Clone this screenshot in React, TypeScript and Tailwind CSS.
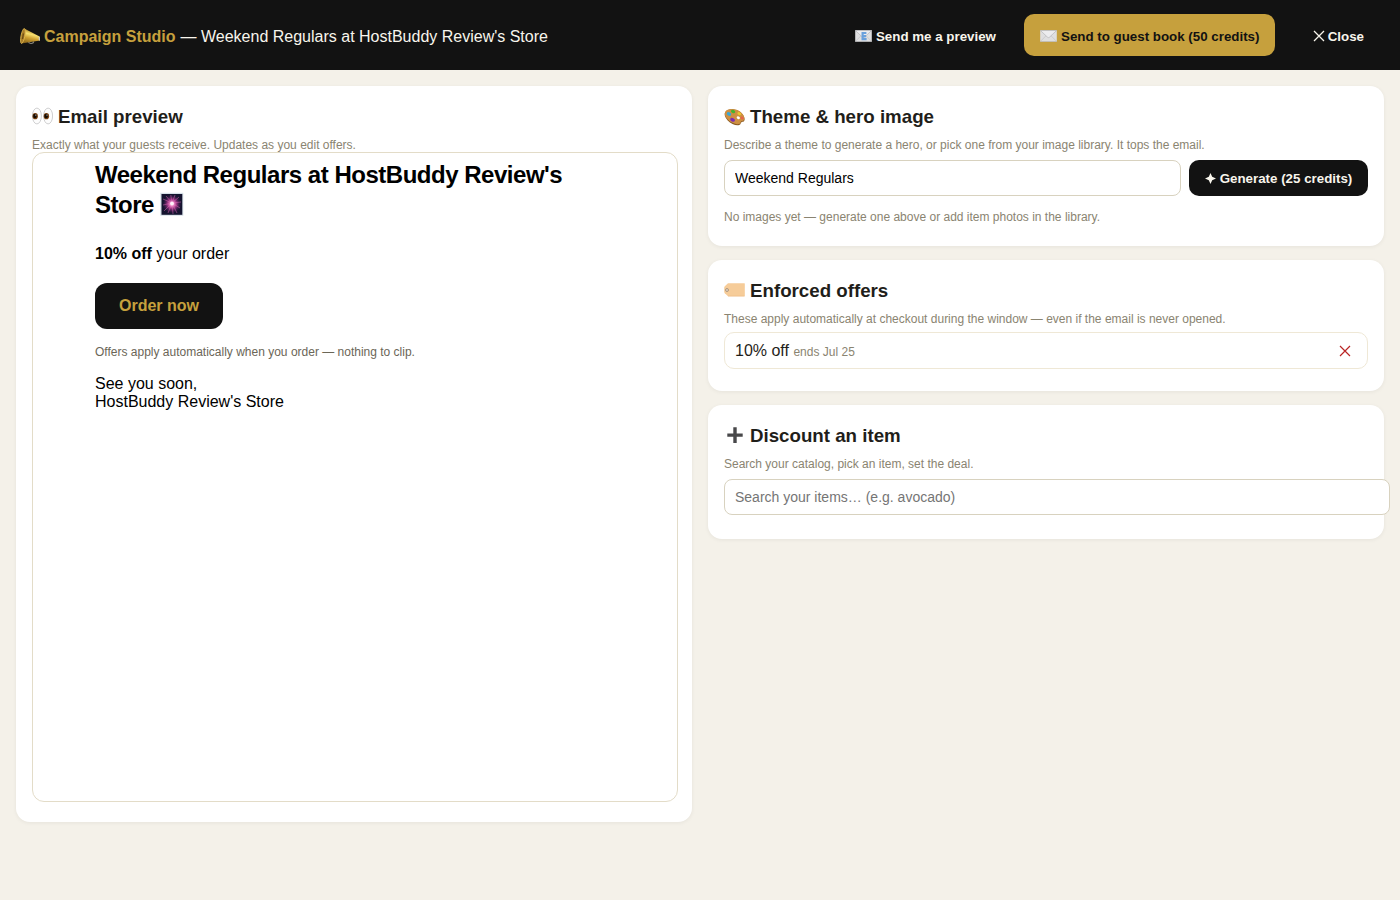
import React from 'react';

function Megaphone() {
  return (
    <svg className="block h-[20px] w-[21px] shrink-0" viewBox="0 0 21 20">
      <defs>
        <linearGradient id="horn" x1="0.3" y1="0" x2="0" y2="1">
          <stop offset="0" stopColor="#a67c1c" />
          <stop offset="0.3" stopColor="#f7e070" />
          <stop offset="0.55" stopColor="#d0a232" />
          <stop offset="1" stopColor="#7c5814" />
        </linearGradient>
      </defs>
      <path d="M8.3 14.4c.4 2.6 4.8 2.8 5.600.1" fill="none" stroke="#8d8a80" strokeWidth="1.1" />
      <path d="M4.200 1.400 19.600 9.600 20 13.600 1.300 16.400Z" fill="url(#horn)" />
      <ellipse cx="2.900" cy="9" rx="1.900" ry="7.600" transform="rotate(11 2.900 9)" fill="#a97c26" stroke="#dcb752" strokeWidth=".8" />
      <path d="M3.400 6.500 2.500 12" stroke="#6b4c15" strokeWidth="1.300" />
      <path d="m18.800 9.500 1.200.5v3.600l-1.200.2Z" fill="#c7c7bd" />
    </svg>
  );
}

function Envelope({ letter = false }: { letter?: boolean }) {
  return (
    <svg className="block h-[12px] w-[17px] shrink-0" viewBox="0 0 17 12">
      <rect x=".2" y=".3" width="16.6" height="11.4" rx=".5" fill="#dfdfe0" />
      <path d="M.5 11.3 6.500 5.300M16.500 11.300l-6-6" stroke="#c3c3c5" strokeWidth=".7" />
      <path d="M.4.5 7.400 7.100q1.100 1 2.200 0L16.600.5Z" fill="#ececee" stroke="#b5b5b8" strokeWidth=".7" />
      <path d="M.2 11.600h16.600" stroke="#b0b0b2" strokeWidth=".6" />
      {letter && (
        <path d="M11.400 3H7.600v6.200h4M7.600 6.100h3.500" fill="none" stroke="#6ba1dc" strokeWidth="2.200" />
      )}
    </svg>
  );
}

function Eyes() {
  return (
    <svg className="mb-[2px] block h-[18px] w-[21px] shrink-0" viewBox="0 0 21 18">
      <g fill="#fdfdfd" stroke="#c9c9cb" strokeWidth=".9">
        <ellipse cx="4.9" cy="9" rx="4.5" ry="7.900" />
        <ellipse cx="16.1" cy="9" rx="4.5" ry="7.900" />
      </g>
      <ellipse cx="3.2" cy="9.2" rx="2.7" ry="3.1" fill="#7a4210" />
      <ellipse cx="14.4" cy="9.2" rx="2.7" ry="3.1" fill="#7a4210" />
      <ellipse cx="3" cy="9" rx="1.8" ry="2.3" fill="#140b05" />
      <ellipse cx="14.2" cy="9" rx="1.8" ry="2.3" fill="#140b05" />
      <circle cx="3.8" cy="8" r=".6" fill="#fff" />
      <circle cx="15" cy="8" r=".6" fill="#fff" />
    </svg>
  );
}

function Palette() {
  return (
    <svg className="block h-[18px] w-[21px] shrink-0" viewBox="0 0 21 18">
      <path d="M1.200 4.200C3 .8 9.500.4 14.200 2.800c4.200 2.100 6.800 6 6.300 9.300-.4 2.200-2 1.600-3 2.100-1.300.6-.4 2.300-2.300 2.800-3.200.8-8.300-1-11.500-4.600C1 9.500-.1 6.500 1.200 4.200Z" fill="#8a5a22" />
      <path d="M1.300 3.700C3.100.5 9.500.2 14.200 2.500c4.100 2.100 6.600 5.800 6.200 8.800-.4 1.900-2 1.400-3 1.900-1.300.6-.4 2.400-2.300 2.800-3.200.7-8.200-1-11.300-4.400C1.200 8.900.1 5.900 1.300 3.700Z" fill="#cd8f42" />
      <ellipse cx="14.300" cy="9.800" rx="1.700" ry="1.300" transform="rotate(25 14.300 9.800)" fill="#fff" />
      <ellipse cx="9.100" cy="3.500" rx="2.200" ry="1.500" transform="rotate(20 9.100 3.500)" fill="#45b52d" />
      <ellipse cx="5" cy="6" rx="2.300" ry="1.700" transform="rotate(25 5 6)" fill="#35a7d8" />
      <ellipse cx="8.600" cy="11.800" rx="2.500" ry="1.800" transform="rotate(25 8.600 11.800)" fill="#7a2db4" />
      <ellipse cx="15.300" cy="5.700" rx="2" ry="1.400" transform="rotate(25 15.300 5.700)" fill="#e9c82d" />
      <ellipse cx="18.100" cy="10" rx="1.700" ry="1.300" transform="rotate(35 18.100 10)" fill="#ea6149" />
    </svg>
  );
}

function Tag() {
  return (
    <svg className="mb-[2px] block h-[18px] w-[21px] shrink-0" viewBox="0 0 21 18">
      <path d="M4 2.300h16.300q.5 0 .5.500v12q0 .5-.5.500H4L.8 12.300Q.2 11.700.2 10.800v-4q0-.9.600-1.500Z" fill="#f6cc99" />
      <path d="M4 15.100h16.500" stroke="#e9b980" strokeWidth=".6" />
      <circle cx="3" cy="9" r="1.500" fill="#e5d4c0" stroke="#9e8a76" strokeWidth=".8" />
    </svg>
  );
}

function Plus() {
  return (
    <svg className="mb-[2px] block h-[18px] w-[21px] shrink-0" viewBox="0 0 21 18">
      <path d="M9.300 1.300h3.400v6.100h6v3.400h-6V17H9.300v-6.200h-6V7.400h6Z" fill="#48484a" />
    </svg>
  );
}

function Sparkler() {
  return (
    <svg className="mb-[2px] block h-[24px] w-[24px] shrink-0" viewBox="0 0 24 24">
      <defs>
        <radialGradient id="glow">
          <stop offset="0" stopColor="#fff" />
          <stop offset=".2" stopColor="#ff9ad0" />
          <stop offset=".5" stopColor="#b53a92" stopOpacity=".8" />
          <stop offset="1" stopColor="#451c55" stopOpacity="0" />
        </radialGradient>
      </defs>
      <rect x=".3" y=".8" width="23" height="23" fill="#d7e1e8" />
      <rect x="1.500" y="2" width="20.800" height="20.800" fill="#15142f" />
      <circle cx="12" cy="12" r="9.500" fill="url(#glow)" />
      <path d="m12 11-1.200-8M12 11l3-8M12 11l7-6M12 11l9-1M12 11l8 5M12 11l5 10M12 11l1 11M12 11 8 21M12 11l-8 8M12 11l-9 2M12 11 3 7M12 11 6 4" stroke="#d866b5" strokeWidth=".5" />
      <circle cx="12" cy="11.500" r="1.900" fill="#fff2fa" />
    </svg>
  );
}

function Cross({ className }: { className: string }) {
  return (
    <svg className={className} viewBox="0 0 12 12" fill="none" stroke="currentColor">
      <path d="m1 1 10 10M11 1 1 11" />
    </svg>
  );
}

function Card({ icon, title, hint, className, children }: {
  icon: React.ReactNode; title: string; hint: string; className: string; children: React.ReactNode;
}) {
  return (
    <section className={`rounded-[14px] bg-white px-4 pt-5 shadow-[0_1px_4px_rgba(0,0,0,0.06)] ${className}`}>
      <h3 className="flex h-[22px] items-center gap-[5px] text-[18.72px] leading-[22px] font-bold whitespace-nowrap text-[#1f1e1a]">
        {icon}
        <span>{title}</span>
      </h3>
      <p className="mt-[10px] h-[14px] text-[12px] leading-[14px] whitespace-nowrap text-[#8a8471]">{hint}</p>
      {children}
    </section>
  );
}

export default function App() {
  return (
    <div className="h-[900px] w-[1400px] overflow-hidden bg-[#f4f1e9] font-['Liberation_Sans',Arial,sans-serif] text-[16px] text-[#1f1e1a]">
      <header className="flex h-[70px] items-center bg-[#121212] px-5 text-[#f8f5ec]">
        <div className="flex items-center pt-[3px] leading-[18px] whitespace-nowrap">
          <Megaphone />
          <b className="ml-[3px] text-[#c6a03d]">Campaign Studio</b>
          <span className="ml-[5px]">— Weekend Regulars at HostBuddy Review's Store</span>
        </div>
        <div className="ml-auto flex gap-3 text-[13.333px] leading-[15px] font-bold whitespace-nowrap">
          <button className="flex h-[42px] items-center gap-1 px-4 pt-[2px]">
            <Envelope letter />
            <span>Send me a preview</span>
          </button>
          <button className="flex h-[42px] w-[251px] items-center gap-1 rounded-[10px] bg-[#c6a03d] px-4 pt-[2px] text-[#121212]">
            <Envelope />
            <span>Send to guest book (50 credits)</span>
          </button>
          <button className="flex h-[42px] w-[93px] items-center justify-end gap-[3px] pt-[2px] pr-4">
            <Cross className="block h-[12px] w-[12px] stroke-[1.3]" />
            <span>Close</span>
          </button>
        </div>
      </header>

      <main className="grid grid-cols-[676px_676px] items-start gap-4 p-4">
        <Card icon={<Eyes />} title="Email preview" hint="Exactly what your guests receive. Updates as you edit offers." className="h-[736px]">
          <div className="h-[650px] w-[646px] rounded-[12px] border border-[#e3dcc8] bg-white pt-[7px] pl-[62px] text-black">
            <h1 className="text-[24px] leading-[30px] font-bold tracking-[-0.48px] whitespace-nowrap">
              <span className="block">Weekend Regulars at HostBuddy Review's</span>
              <span className="flex items-center gap-[6px]">
                <span>Store</span>
                <Sparkler />
              </span>
            </h1>
            <p className="mt-[25px] leading-[18px]"><b>10% off</b> your order</p>
            <a className="mt-[20px] flex h-[46px] w-[128px] items-center justify-center rounded-[12px] bg-[#121212] leading-[18px] font-bold text-[#c6a03d]">Order now</a>
            <p className="mt-[16px] text-[12px] leading-[14px] text-[#6b6657]">Offers apply automatically when you order — nothing to clip.</p>
            <p className="mt-[16px] leading-[18px]">See you soon,<br />HostBuddy Review's Store</p>
          </div>
        </Card>

        <div className="flex flex-col gap-[14px]">
          <Card icon={<Palette />} title="Theme & hero image" hint="Describe a theme to generate a hero, or pick one from your image library. It tops the email." className="h-[160px]">
            <div className="mt-2 flex gap-2">
              <input defaultValue="Weekend Regulars" className="h-9 w-[457px] rounded-[8px] border border-[#d8d2bf] bg-white px-[10px] text-[14px] text-black outline-none" />
              <button className="flex h-9 w-[179px] items-center justify-center gap-1 rounded-[10px] bg-[#121212] text-[13.333px] leading-[15px] font-bold whitespace-nowrap text-[#f8f5ec]">
                <svg className="block h-[11px] w-[11px]" viewBox="0 0 11 11" fill="currentColor">
                  <path d="M5.500 0 7.200 3.800 11 5.500 7.200 7.200 5.500 11 3.800 7.200 0 5.500 3.800 3.800Z" />
                </svg>
                <span>Generate (25 credits)</span>
              </button>
            </div>
            <p className="mt-[14px] text-[12px] leading-[14px] text-[#8a8471]">No images yet — generate one above or add item photos in the library.</p>
          </Card>

          <Card icon={<Tag />} title="Enforced offers" hint="These apply automatically at checkout during the window — even if the email is never opened." className="h-[131px]">
            <div className="mt-[6px] flex h-[37px] items-center justify-between rounded-[10px] border border-[#efe8d6] pr-[16px] pl-[10px]">
              <span className="pt-[2px] leading-[18px]">10% off <span className="text-[12px] text-[#8a8471]">ends Jul 25</span></span>
              <Cross className="block h-[12px] w-[12px] stroke-[1.2] text-[#b92525]" />
            </div>
          </Card>

          <Card icon={<Plus />} title="Discount an item" hint="Search your catalog, pick an item, set the deal." className="h-[134px]">
            <input placeholder="Search your items… (e.g. avocado)" className="mt-2 block h-9 w-[666px] rounded-[8px] border border-[#d8d2bf] bg-white px-[10px] text-[14px] outline-none placeholder:text-[#757575]" />
          </Card>
        </div>
      </main>
    </div>
  );
}
